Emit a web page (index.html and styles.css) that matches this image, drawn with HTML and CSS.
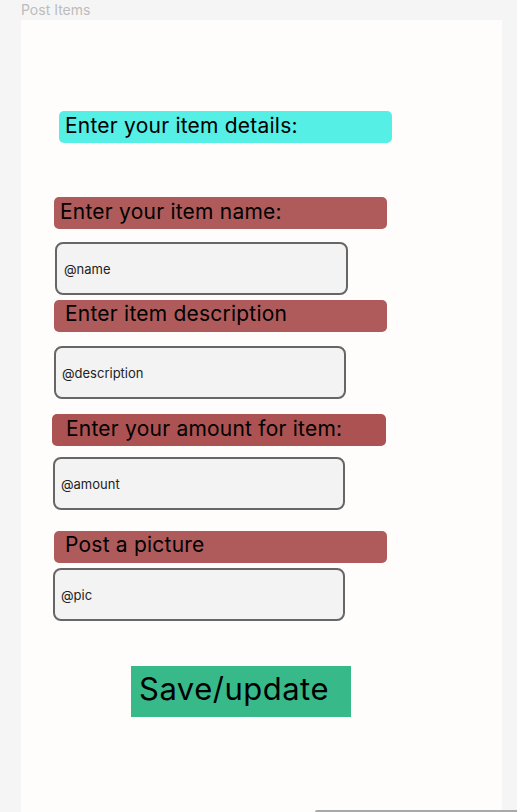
FILE: index.html
```html
<!DOCTYPE html>
<html lang="en">
<head>
<meta charset="utf-8">
<title>Post Items</title>
<link rel="stylesheet" href="styles.css">
</head>
<body>
<div class="page">
  <div class="frame-title">Post Items</div>
  <main class="frame">
    <div class="heading">Enter your item details:</div>

    <div class="label l1">Enter your item name:</div>
    <div class="field f1"><span>@name</span></div>

    <div class="label l2">Enter item description</div>
    <div class="field f2"><span>@description</span></div>

    <div class="label l3">Enter your amount for item:</div>
    <div class="field f3"><span>@amount</span></div>

    <div class="label l4">Post a picture</div>
    <div class="field f4"><span>@pic</span></div>

    <div class="save">Save/update</div>
  </main>
  <div class="hscroll"></div>
</div>
</body>
</html>
```

FILE: styles.css
```css
html, body {
  margin: 0;
  padding: 0;
  height: 100%;
  overflow: hidden;
}

body {
  background: #f5f5f5;
  font-family: Inter, "Noto Sans", sans-serif;
  color: #000;
}

.page {
  position: relative;
  height: 812px;
}

.frame-title {
  height: 20px;
  padding-left: 21px;
  font-size: 14px;
  line-height: 19px;
  color: #bcbcbc;
}

.frame {
  margin-left: 21px;
  width: 481px;
  height: 800px;
  background: #fefdfc;
  display: flex;
  flex-direction: column;
  align-items: flex-start;
}

.heading {
  margin-top: 91px;
  margin-left: 38px;
  width: 333px;
  height: 32px;
  box-sizing: border-box;
  padding-left: 6px;
  background: #55efe6;
  border-radius: 5px;
  font-size: 21px;
  line-height: 30px;
  letter-spacing: 0.22px;
}

.label {
  width: 333px;
  height: 32px;
  box-sizing: border-box;
  background: #b05b5b;
  border-radius: 5px;
  font-size: 21px;
  line-height: 30px;
  letter-spacing: 0.22px;
}

.l1 { margin-top: 54px; margin-left: 33px; padding-left: 6px; }
.l2 { margin-top: 5px;  margin-left: 33px; padding-left: 11px; line-height: 27px; }
.l3 { margin-top: 15px; margin-left: 31px; width: 334px; padding-left: 14px; background: #ac5252; }
.l4 { margin-top: 21px; margin-left: 33px; padding-left: 11px; line-height: 27px; }

.field {
  width: 293px;
  height: 53px;
  box-sizing: border-box;
  border: 2px solid #666;
  border-radius: 8px;
  background: #f3f3f3;
  display: flex;
  align-items: center;
  padding-left: 6px;
  font-size: 13px;
  color: #222;
}

.f1 { margin-top: 13px; margin-left: 34px; padding-left: 7px; }
.f2 { margin-top: 14px; margin-left: 33px; width: 292px; }
.f3 { margin-top: 11px; margin-left: 32px; width: 292px; }
.f4 { margin-top: 5px;  margin-left: 32px; width: 292px; }

.save {
  margin-top: 45px;
  margin-left: 110px;
  width: 220px;
  height: 51px;
  box-sizing: border-box;
  padding-left: 8px;
  background: #38b98a;
  font-size: 31px;
  line-height: 46px;
  letter-spacing: 0.5px;
}

.hscroll {
  position: absolute;
  left: 315px;
  right: 0;
  bottom: 0;
  height: 2px;
  background: #a9a9a9;
  border-top-left-radius: 2px;
}
```
